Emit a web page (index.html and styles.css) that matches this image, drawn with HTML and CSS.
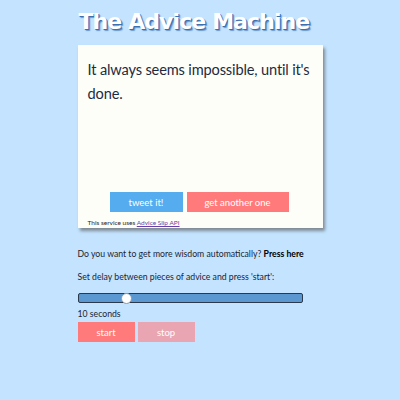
FILE: index.html
```html
<!DOCTYPE html>
<html>
<head>
<meta charset="utf-8">
<link rel="stylesheet" href="styles.css">
</head>
<body>
<div class="wrap">
  <h1 class="title">The Advice Machine</h1>
  <div class="card">
    <p class="quote">It always seems impossible, until it's done.</p>
    <div class="actions">
      <button class="btn tweet">tweet it!</button>
      <button class="btn another">get another one</button>
    </div>
    <p class="credit">This service uses <a href="#">Advice Slip API</a></p>
  </div>
  <p class="line">Do you want to get more wisdom automatically? <b>Press here</b></p>
  <p class="line second">Set delay between pieces of advice and press 'start':</p>
  <input class="slider" type="range" min="0" max="50" value="10">
  <p class="secs">10 seconds</p>
  <div class="controls">
    <button class="btn start">start</button>
    <button class="btn stop">stop</button>
  </div>
</div>
</body>
</html>
```
FILE: styles.css
```css
html, body {
  margin: 0;
  padding: 0;
  background: #c3e3fe;
}
body {
  font-family: "Lato", "Open Sans", sans-serif;
  color: #1c2433;
}
.wrap {
  width: 245px;
  margin: 0 auto;
}
.title {
  margin: 0;
  padding: 7px 0 0 1px;
  height: 45px;
  box-sizing: border-box;
  text-align: left;
  font-family: "DejaVu Sans", Verdana, sans-serif;
  font-weight: bold;
  font-size: 22px;
  line-height: 30px;
  color: #ffffff;
  letter-spacing: -0.9px;
  text-shadow: 1px 1px 0 #3a6fb0, 2px 2px 1px #6a9ad0;
  white-space: nowrap;
}
.card {
  background: #fefef8;
  height: 183px;
  box-sizing: border-box;
  box-shadow: 2px 3px 3px #7f8a96;
  padding: 13px 4px 0 10px;
  display: flex;
  flex-direction: column;
}
.quote {
  margin: 0;
  font-family: "Lato", sans-serif;
  font-size: 14.6px;
  letter-spacing: -0.15px;
  line-height: 24px;
  color: #1d2b42;
  flex: 1;
}
.actions {
  display: flex;
  gap: 4px;
  margin-left: 22px;
}
.btn {
  border: none;
  color: #ffffff;
  font-family: "Lato", sans-serif;
  font-size: 9.5px;
  height: 20px;
  padding: 0;
  cursor: pointer;
}
.tweet {
  background: #55acee;
  width: 73px;
}
.another {
  background: #ff7a7a;
  width: 102px;
}
.credit {
  margin: 6px 0 0;
  height: 10px;
  line-height: 10px;
  font-family: "Lato", sans-serif;
  font-size: 6.5px;
  color: #1c2433;
}
.credit a {
  color: #6a3fa8;
}
.line {
  margin: 20px 0 0;
  font-family: "Lato", sans-serif;
  font-size: 8.7px;
  line-height: 12px;
  color: #1c2433;
}
.line b {
  font-weight: bold;
  color: #000;
}
.line.second {
  margin-top: 11px;
}
.slider {
  -webkit-appearance: none;
  appearance: none;
  display: block;
  margin: 10px 0 0;
  width: 225px;
  height: 10px;
  background: #5b97d1;
  border: 1px solid #2a3a4c;
  border-radius: 2px;
  box-sizing: border-box;
  overflow: visible;
}
.slider::-webkit-slider-thumb {
  -webkit-appearance: none;
  appearance: none;
  width: 11px;
  height: 11px;
  border-radius: 50%;
  background: #ffffff;
  border: 1px solid #8a9bb0;
  box-sizing: border-box;
}
.secs {
  margin: 5px 0 0;
  font-family: "Lato", sans-serif;
  font-size: 8.7px;
  line-height: 12px;
}
.controls {
  display: flex;
  gap: 3px;
  margin-top: 2px;
}
.start {
  width: 57px;
  background: #ff7b7b;
}
.stop {
  width: 57px;
  background: #e9a6b2;
}
```
